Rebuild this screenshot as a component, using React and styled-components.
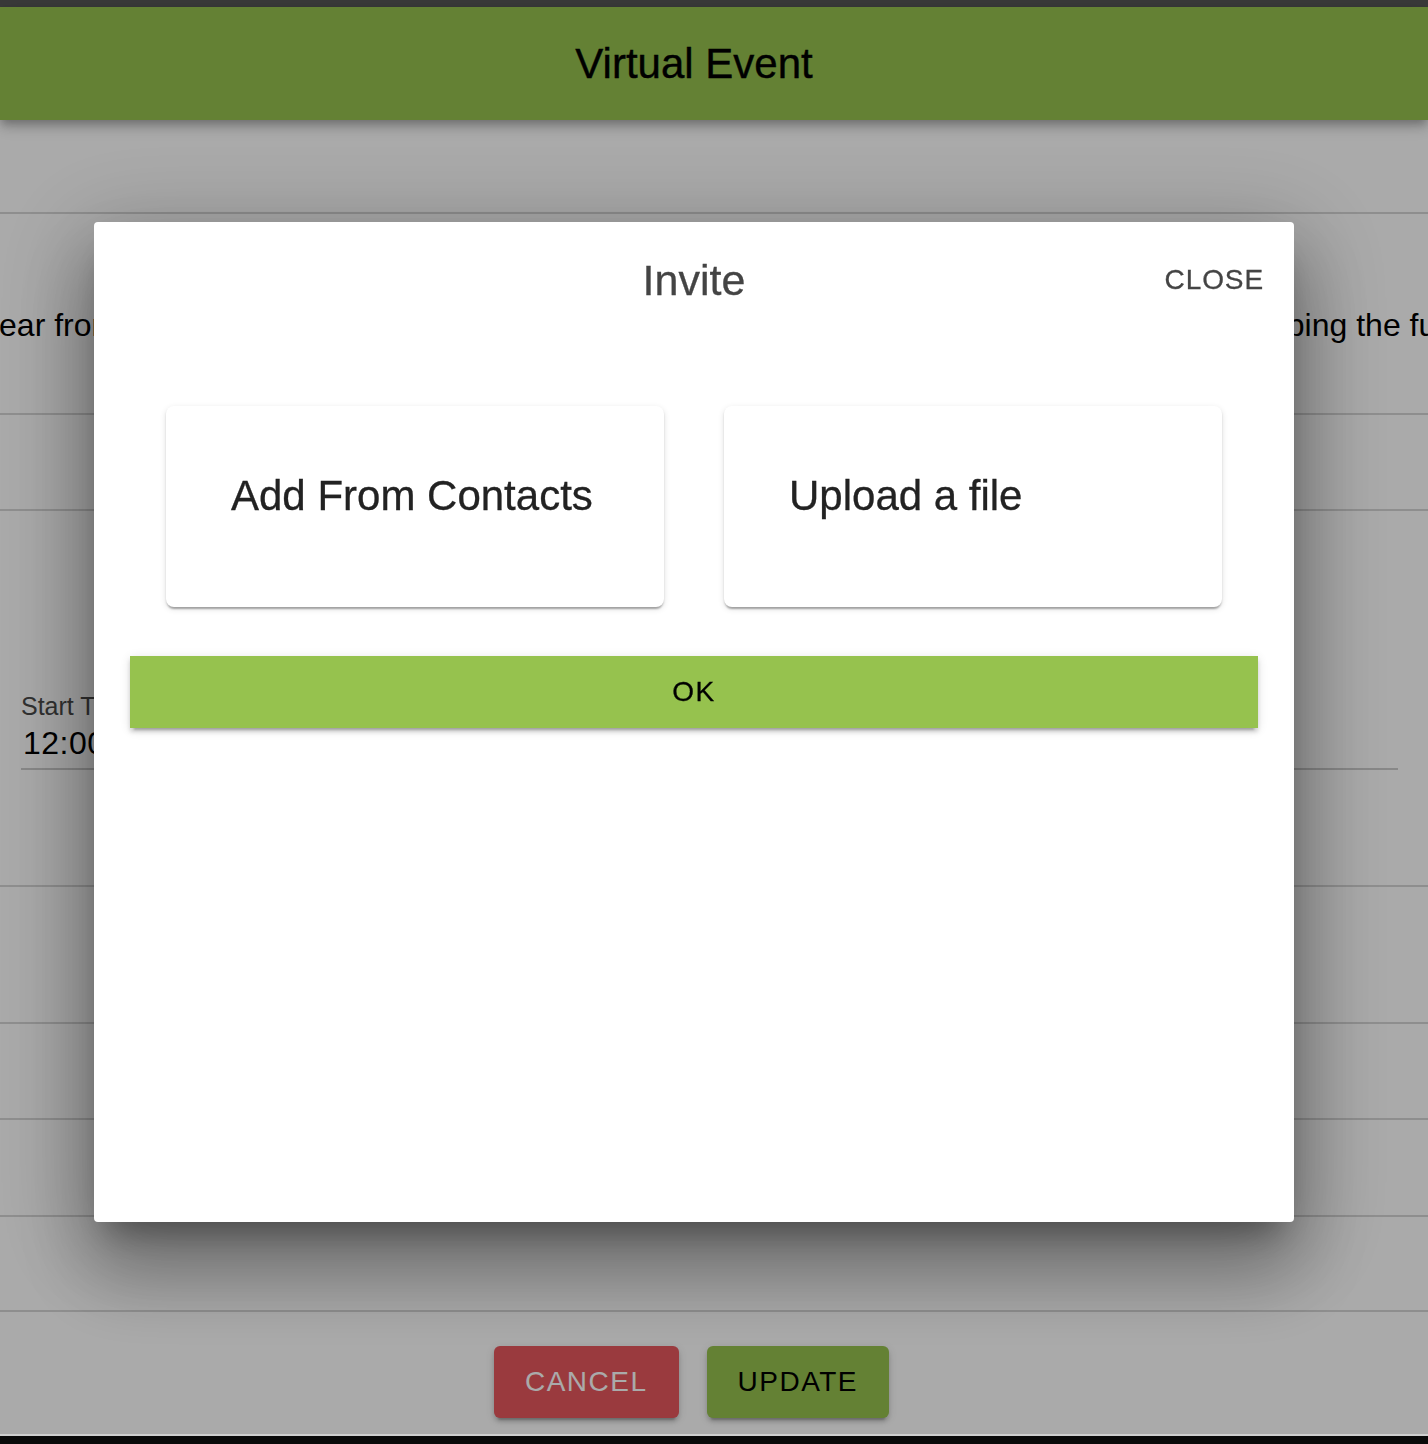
import React from "react";
import styled, { createGlobalStyle } from "styled-components";

const GlobalStyle = createGlobalStyle`
  html, body { margin: 0; padding: 0; }
  body {
    font-family: "Liberation Sans", Arial, Helvetica, sans-serif;
    background: #ffffff;
    overflow: hidden;
  }
  * { box-sizing: border-box; }
`;

const Page = styled.div`
  width: 100%;
  height: 1444px;
  display: flex;
  flex-direction: column;
  overflow: hidden;
  background: #ffffff;
`;

const StatusStrip = styled.div`
  height: 7px;
  background: #575757;
  flex: none;
`;

const AppBar = styled.header`
  position: relative;
  z-index: 2;
  height: 113px;
  flex: none;
  background: #96c24e;
  display: flex;
  align-items: center;
  justify-content: center;
  padding-right: 40px;
  color: #000;
  font-size: 42px;
  -webkit-text-stroke: 0.4px #000;
  box-shadow: 0 4px 8px -2px rgba(0, 0, 0, 0.2), 0 8px 10px 0 rgba(0, 0, 0, 0.14),
    0 2px 20px 0 rgba(0, 0, 0, 0.12);
`;

const Row = styled.section`
  height: ${(p) => p.$h}px;
  flex: none;
  border-bottom: 2px solid #d6d6d6;
  display: flex;
  flex-direction: column;
  overflow: hidden;
`;

const LeadText = styled.p`
  margin: 93px 0 0;
  font-size: 32px;
  line-height: 1.15;
  color: #000;
  white-space: nowrap;
  text-align: center;
  display: flex;
  justify-content: center;
`;

const Field = styled.div`
  margin: 181px 30px 0 21px;
  border-bottom: 2px solid #cccccc;
  padding-bottom: 5px;
  display: flex;
  flex-direction: column;
  gap: 3px;
`;

const FieldLabel = styled.label`
  font-size: 25px;
  line-height: 28px;
  color: #4a4a4a;
`;

const FieldValue = styled.div`
  font-size: 32px;
  line-height: 40px;
  padding-left: 2px;
  color: #000;
  letter-spacing: 0.5px;
`;

const Footer = styled.footer`
  height: 122px;
  flex: none;
  display: flex;
  justify-content: center;
  align-items: flex-start;
  gap: 28px;
  padding-top: 34px;
  padding-right: 45px;
`;

const ActionButton = styled.button`
  height: 72px;
  padding: 0 31px;
  border: none;
  border-radius: 6px;
  font-family: inherit;
  font-size: 28px;
  letter-spacing: 1.5px;
  background: ${(p) => (p.$variant === "danger" ? "#e7575e" : "#96c24e")};
  color: ${(p) => (p.$variant === "danger" ? "#ffffff" : "#000000")};
  box-shadow: 0 6px 2px -4px rgba(0, 0, 0, 0.2), 0 4px 4px 0 rgba(0, 0, 0, 0.14),
    0 2px 10px 0 rgba(0, 0, 0, 0.12);
`;

const ChromeBar = styled.div`
  position: relative;
  z-index: 20;
  height: 10px;
  flex: none;
  border-top: 2px solid #cfcfcf;
  background: #0a0a0a;
`;

const Backdrop = styled.div`
  position: fixed;
  inset: 0;
  z-index: 10;
  background: rgba(0, 0, 0, 0.333);
  display: flex;
  align-items: flex-start;
  padding: 222px 0 0 94px;
`;

const Dialog = styled.div`
  width: 1200px;
  height: 1000px;
  background: #ffffff;
  border-radius: 4px;
  display: flex;
  flex-direction: column;
  box-shadow: 0 22px 30px -14px rgba(0, 0, 0, 0.32), 0 48px 76px 6px rgba(0, 0, 0, 0.26),
    0 18px 92px 16px rgba(0, 0, 0, 0.2);
`;

const DialogHeader = styled.div`
  display: grid;
  grid-template-columns: 1fr auto 1fr;
  align-items: center;
  padding: 34px 30px 0;
  height: 82px;
`;

const DialogTitle = styled.h2`
  grid-column: 2;
  margin: 0;
  font-size: 43px;
  line-height: 48px;
  font-weight: 400;
  color: #444444;
  -webkit-text-stroke: 0.3px #444444;
`;

const CloseButton = styled.button`
  grid-column: 3;
  justify-self: end;
  border: none;
  background: transparent;
  padding: 0;
  font-family: inherit;
  font-size: 28px;
  line-height: 32px;
  letter-spacing: 0.9px;
  color: #444444;
  -webkit-text-stroke: 0.3px #444444;
`;

const DialogBody = styled.div`
  display: flex;
  flex-direction: column;
  padding: 102px 36px 0;
`;

const OptionGrid = styled.div`
  display: grid;
  grid-template-columns: 1fr 1fr;
  gap: 60px;
  padding: 0 36px;
`;

const OptionCard = styled.div`
  height: 201px;
  border-radius: 8px;
  background: #ffffff;
  padding: 66px 30px 0 65px;
  font-size: 42px;
  line-height: 48px;
  color: #222222;
  -webkit-text-stroke: 0.3px #222222;
  box-shadow: 0 4px 2px -2px rgba(0, 0, 0, 0.2), 0 2px 2px 0 rgba(0, 0, 0, 0.14),
    0 2px 6px 0 rgba(0, 0, 0, 0.12);
`;

const OkButton = styled.button`
  margin-top: 49px;
  height: 72px;
  width: 100%;
  border: none;
  border-radius: 0;
  background: #96c24e;
  color: #000;
  font-family: inherit;
  font-size: 28px;
  letter-spacing: 1.5px;
  -webkit-text-stroke: 0.3px #000;
  box-shadow: 0 6px 2px -4px rgba(0, 0, 0, 0.2), 0 4px 4px 0 rgba(0, 0, 0, 0.14),
    0 2px 10px 0 rgba(0, 0, 0, 0.12);
`;

const rows = [94, 201, 96, 376, 137, 96, 97, 95];

export default function App() {
  return (
    <>
      <GlobalStyle />
      <Page>
        <StatusStrip />
        <AppBar>Virtual Event</AppBar>
        <Row $h={rows[0]} />
        <Row $h={rows[1]}>
          <LeadText>
            We'd love to hear from you about the speakers, sessions and ideas from our
            community that are now shaping the future of events
          </LeadText>
        </Row>
        <Row $h={rows[2]} />
        <Row $h={rows[3]}>
          <Field>
            <FieldLabel>Start Time</FieldLabel>
            <FieldValue>12:00 PM</FieldValue>
          </Field>
        </Row>
        <Row $h={rows[4]} />
        <Row $h={rows[5]} />
        <Row $h={rows[6]} />
        <Row $h={rows[7]} />
        <Footer>
          <ActionButton $variant="danger">CANCEL</ActionButton>
          <ActionButton $variant="primary">UPDATE</ActionButton>
        </Footer>
        <ChromeBar />
      </Page>
      <Backdrop>
        <Dialog>
          <DialogHeader>
            <DialogTitle>Invite</DialogTitle>
            <CloseButton>CLOSE</CloseButton>
          </DialogHeader>
          <DialogBody>
            <OptionGrid>
              <OptionCard>Add From Contacts</OptionCard>
              <OptionCard>Upload a file</OptionCard>
            </OptionGrid>
            <OkButton>OK</OkButton>
          </DialogBody>
        </Dialog>
      </Backdrop>
    </>
  );
}
